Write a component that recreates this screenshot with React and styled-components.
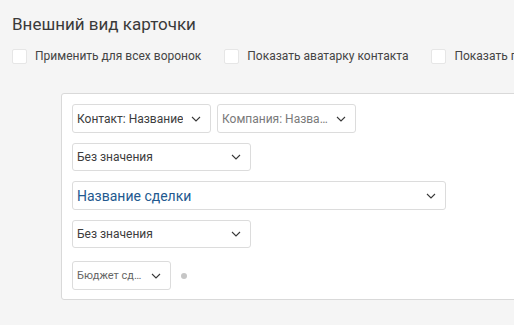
import React from "react";
import styled, { createGlobalStyle } from "styled-components";

const GlobalStyle = createGlobalStyle`
  html, body {
    margin: 0;
    padding: 0;
    background: #f5f5f5;
    overflow: hidden;
  }
  body {
    font-family: Roboto, "Noto Sans", sans-serif;
    color: #3d3d3d;
  }
`;

const Page = styled.div`
  width: 514px;
  height: 325px;
  overflow: hidden;
  padding: 12px 0 0 12px;
  box-sizing: border-box;
`;

const Title = styled.h2`
  margin: 0;
  font-size: 17px;
  line-height: 24px;
  font-weight: 400;
  color: #3a3a3a;
  white-space: nowrap;
`;

const CheckRow = styled.div`
  display: flex;
  gap: 23px;
  margin-top: 13px;
  white-space: nowrap;
`;

const CheckItem = styled.label`
  display: flex;
  align-items: center;
  gap: 8px;
  font-size: 12px;
  line-height: 15px;
  color: #444;
`;

const Box = styled.span`
  width: 15px;
  height: 15px;
  flex: none;
  background: #fff;
  border: 1px solid #e6e6e6;
  box-sizing: border-box;
  border-radius: 2px;
`;

const Card = styled.div`
  margin: 29px 0 0 49px;
  width: 480px;
  background: #fff;
  border: 1px solid #d9d9d9;
  border-radius: 3px;
  padding: 10px 10px 9px 10px;
  box-sizing: border-box;
  display: flex;
  flex-direction: column;
  gap: 10px;
`;

const Row = styled.div`
  display: flex;
  align-items: center;
  gap: 6px;
  margin-top: ${(p) => p.$extra || 0}px;
`;

const Select = styled.div`
  width: ${(p) => p.$w}px;
  height: ${(p) => p.$h || 28}px;
  box-sizing: border-box;
  border: 1px solid #dcdcdc;
  border-radius: 3px;
  background: #fff;
  display: flex;
  align-items: center;
  justify-content: space-between;
  padding: 0 9px 0 4px;
  white-space: nowrap;
  overflow: hidden;
`;

const Label = styled.span`
  font-size: ${(p) => p.$size || 12}px;
  color: ${(p) => p.$color || "#3d3d3d"};
  overflow: hidden;
  text-overflow: ellipsis;
`;

const Dot = styled.span`
  width: 6px;
  height: 6px;
  border-radius: 50%;
  background: #c6c6c6;
  margin-left: 4px;
`;

const Chevron = () => (
  <svg width="10" height="6" viewBox="0 0 10 6" style={{ flex: "none", marginLeft: 5 }}>
    <path d="M1 1l4 4 4-4" fill="none" stroke="#3a3a3a" strokeWidth="1.1" />
  </svg>
);

export default function App() {
  return (
    <>
      <GlobalStyle />
      <Page>
        <Title>Внешний вид карточки</Title>
        <CheckRow>
          <CheckItem><Box />Применить для всех воронок</CheckItem>
          <CheckItem><Box />Показать аватарку контакта</CheckItem>
          <CheckItem><Box />Показать первую строку</CheckItem>
        </CheckRow>
        <Card>
          <Row>
            <Select $w={139} $h={29}>
              <Label>Контакт: Название</Label>
              <Chevron />
            </Select>
            <Select $w={139} $h={29}>
              <Label $color="#7a7a7a">Компания: Название</Label>
              <Chevron />
            </Select>
          </Row>
          <Row>
            <Select $w={179}>
              <Label>Без значения</Label>
              <Chevron />
            </Select>
          </Row>
          <Row>
            <Select $w={374} $h={29}>
              <Label $size={14} $color="#23598f">Название сделки</Label>
              <Chevron />
            </Select>
          </Row>
          <Row>
            <Select $w={179}>
              <Label>Без значения</Label>
              <Chevron />
            </Select>
          </Row>
          <Row $extra={3}>
            <Select $w={99} $h={29}>
              <Label $size={11} $color="#666">Бюджет сделки</Label>
              <Chevron />
            </Select>
            <Dot />
          </Row>
        </Card>
      </Page>
    </>
  );
}
